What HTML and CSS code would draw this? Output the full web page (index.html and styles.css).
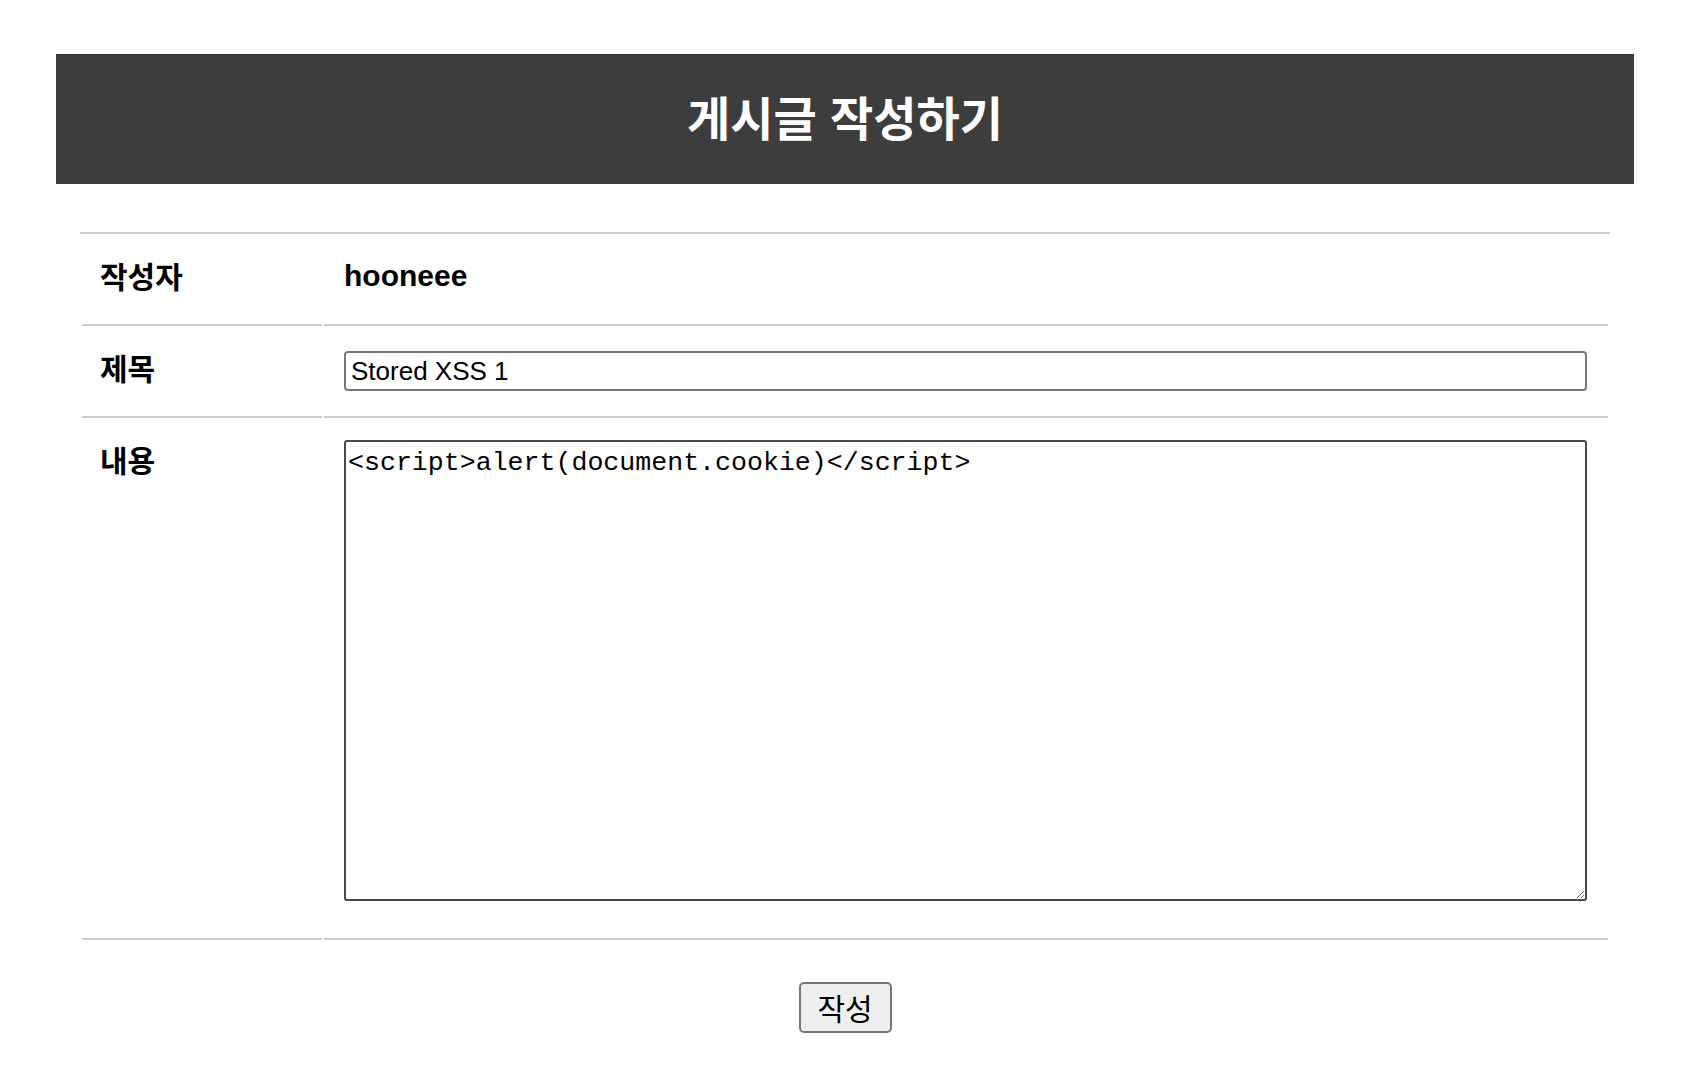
FILE: index.html
```html
<!DOCTYPE html>
<html lang="ko">

<head>
    <meta charset="UTF-8">
    <meta name="viewport" content="width=device-width, initial-scale=1.0">
    <title>게시글 작성하기</title>
    <link rel="stylesheet" href="styles.css">
</head>

<body>
    <div class="wrap">
        <div class="top">
            <h1>게시글 작성하기</h1>
        </div>
        <form>
            <table class="write">
                <tr>
                    <th>작성자</th>
                    <td class="writer">hooneee</td>
                </tr>
                <tr>
                    <th>제목</th>
                    <td class="field"><input type="text" name="title" value="Stored XSS 1"></td>
                </tr>
                <tr>
                    <th>내용</th>
                    <td class="field area"><textarea name="content"><script>alert(document.cookie)</script></textarea></td>
                </tr>
            </table>
            <div class="actions">
                <button type="button">작성</button>
            </div>
        </form>
    </div>
</body>

</html>
```

FILE: styles.css
```css
body {
    margin: 0;
    font-family: "Noto Sans CJK KR", sans-serif;
    color: #000;
    background-color: #fff;
}

.wrap {
    width: 1578px;
    margin: 54px 0 0 56px;
}

.top {
    background-color: #3d3d3d;
    height: 130px;
    display: flex;
    align-items: center;
    justify-content: center;
}

.top h1 {
    margin: 0;
    padding-bottom: 8px;
    color: #fff;
    font-size: 47px;
    font-weight: 700;
    line-height: 1;
}

.write {
    width: 1530px;
    margin: 48px 24px 0;
    border-collapse: separate;
    border-spacing: 2px;
    border-top: 2px solid #ccc;
    table-layout: fixed;
}

.write th,
.write td {
    border-bottom: 2px solid #ccc;
    vertical-align: top;
}

.write th {
    width: 202px;
    padding: 19px 20px 29px 18px;
    text-align: left;
    font-size: 30px;
    font-weight: 700;
    line-height: 40px;
}

.writer {
    padding: 20px 21px 28px 20px;
    font-family: "Liberation Sans", sans-serif;
    font-size: 30px;
    font-weight: 700;
    line-height: 40px;
}

.field {
    padding: 23px 21px 25px 20px;
}

.field.area {
    padding: 20px 21px 37px 20px;
}

input {
    display: block;
    width: 100%;
    height: 40px;
    box-sizing: border-box;
    padding: 0 5px;
    border: 2px solid #767676;
    border-radius: 4px;
    font-family: "Liberation Sans", sans-serif;
    font-size: 26px;
    color: #000;
}

textarea {
    display: block;
    width: 100%;
    height: 461px;
    box-sizing: border-box;
    padding: 6px 2px 2px;
    border: 2px solid #4a4a4a;
    border-radius: 3px;
    font-family: "Liberation Mono", monospace;
    font-size: 26.6px;
    line-height: 1.15;
    color: #000;
}

.actions {
    margin-top: 40px;
    text-align: center;
}

button {
    width: 93px;
    height: 51px;
    padding: 0 0 2px;
    background-color: #efefef;
    border: 2px solid #767676;
    border-radius: 5px;
    font-family: "Noto Sans CJK KR", sans-serif;
    font-size: 30px;
    line-height: 1;
    color: #000;
}
```
